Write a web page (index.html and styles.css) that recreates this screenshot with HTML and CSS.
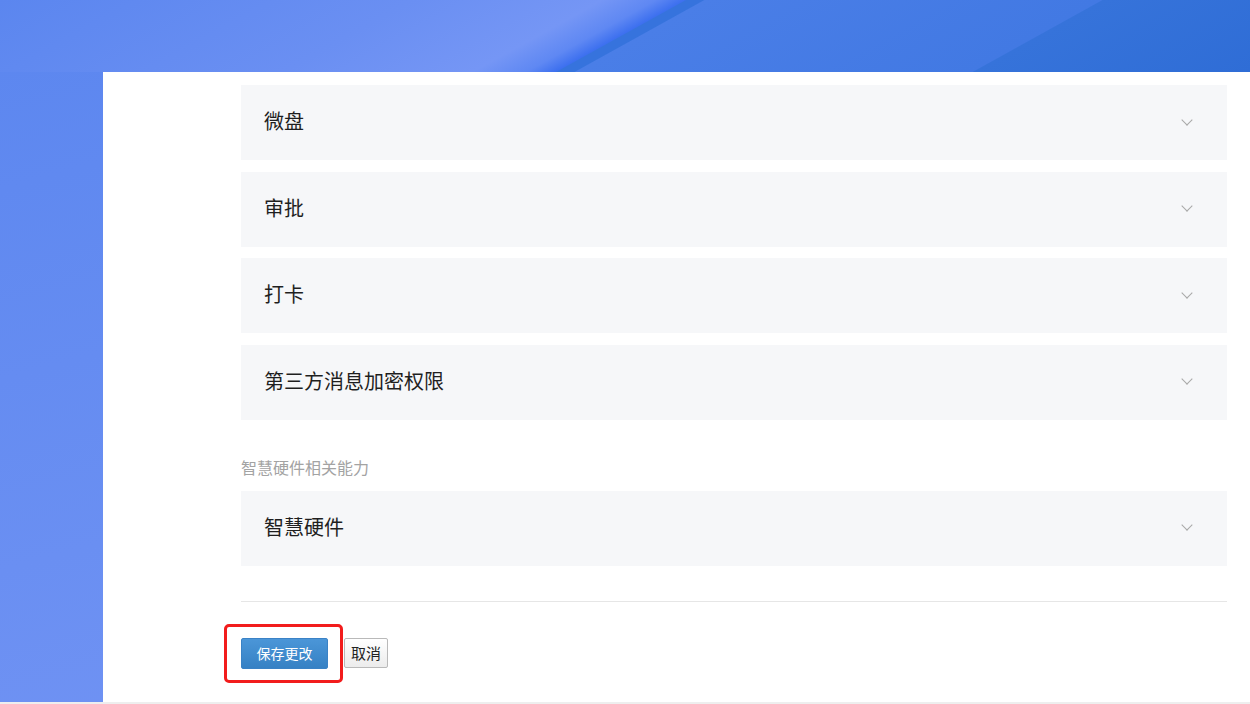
FILE: index.html
```html
<!DOCTYPE html>
<html>
<head>
<meta charset="utf-8">
<title>权限设置</title>
<link rel="stylesheet" href="styles.css">
</head>
<body>
<div class="topband"></div>
<div class="panel">
    <div class="acc-item"><span>微盘</span><i class="chev"></i></div>
    <div class="acc-item"><span>审批</span><i class="chev"></i></div>
    <div class="acc-item"><span>打卡</span><i class="chev"></i></div>
    <div class="acc-item"><span>第三方消息加密权限</span><i class="chev"></i></div>

    <div class="group-label">智慧硬件相关能力</div>
    <div class="acc-item"><span>智慧硬件</span><i class="chev"></i></div>

    <div class="divider"></div>

    <div class="actions">
        <span class="mark"></span>
        <button class="btn btn-save">保存更改</button>
        <button class="btn btn-cancel">取消</button>
    </div>
</div>
<div class="foot"></div>
</body>
</html>
```

FILE: styles.css
```css
html, body {
    margin: 0;
    padding: 0;
}

body {
    width: 1250px;
    height: 704px;
    overflow: hidden;
    display: flex;
    flex-direction: column;
    font-family: "Noto Sans CJK SC", "Noto Sans", sans-serif;
    background: linear-gradient(165deg, #5b86ef 0%, #6a8ff2 55%, #7696f5 100%);
}

.topband {
    height: 72px;
    flex: none;
    background: linear-gradient(151deg,
        #5b86ef 0px,
        #6a8ff2 200px,
        #7596f5 292px,
        #5f88f3 318px,
        #3d70ef 332px,
        #3673dd 333px,
        #3673dd 341px,
        #4a7ee7 342px,
        #4279e3 534px,
        #3673da 535px,
        #2f6dd6 669px);
}

.panel {
    flex: 1;
    margin-left: 103px;
    background: #fff;
    padding: 13px 23px 0 138px;
}

.acc-item {
    box-sizing: border-box;
    height: 75px;
    margin-bottom: 11.67px;
    background: #f6f7f9;
    display: flex;
    align-items: center;
    justify-content: space-between;
    padding: 0 36px 4px 23px;
    font-size: 20px;
    color: #1f1f1f;
}

.chev {
    width: 7px;
    height: 7px;
    border-right: 1.5px solid #a8a8a8;
    border-bottom: 1.5px solid #a8a8a8;
    transform: rotate(45deg);
    margin-top: -2px;
}

.group-label {
    font-size: 16px;
    line-height: 20px;
    color: #a3a3a3;
    margin: 37px 0 14px;
}

.divider {
    height: 1px;
    background: #e6e6e6;
    margin-top: 35px;
}

.actions {
    position: relative;
    display: flex;
    align-items: flex-start;
    gap: 16px;
    margin-top: 36px;
}

.btn {
    font-family: "Noto Sans CJK SC", sans-serif;
    border-radius: 2px;
    padding: 0;
    cursor: pointer;
}

.btn-save {
    width: 87px;
    height: 31px;
    font-size: 14px;
    color: #fff;
    border: 1px solid #3a82c6;
    background: linear-gradient(#4b96d8, #3681c4);
}

.btn-cancel {
    width: 44px;
    height: 30px;
    font-size: 15px;
    color: #222;
    border: 1px solid #b9b9b9;
    background: linear-gradient(#ffffff, #ececec);
}

.mark {
    position: absolute;
    left: -17px;
    top: -14px;
    width: 113px;
    height: 53px;
    border: 3px solid #f21c1c;
    border-radius: 5px;
}

.foot {
    height: 2px;
    flex: none;
    background: #eeeeee;
}
```
